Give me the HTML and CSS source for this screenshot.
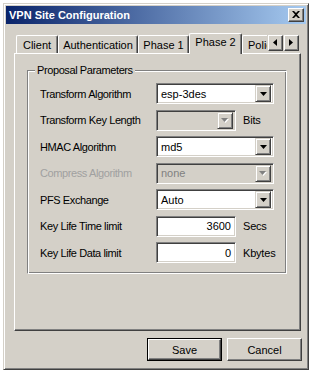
FILE: index.html
```html
<!DOCTYPE html>
<html>
<head>
<meta charset="utf-8">
<title>VPN Site Configuration</title>
<link rel="stylesheet" href="styles.css">
</head>
<body>
<div class="window">
  <div class="titlebar">
    <span class="title">VPN Site Configuration</span>
    <span class="close"><svg width="8" height="7" viewBox="0 0 8 7"><path d="M0 0h2l2 2 2-2h2L5 3.5 8 7H6L4 5 2 7H0l3-3.5z" fill="#000"/></svg></span>
  </div>
  <div class="content">
    <div class="tabstrip">
      <div class="tabrow">
        <div class="tab w-client">Client</div>
        <div class="tab w-auth">Authentication</div>
        <div class="tab w-p1">Phase 1</div>
        <div class="tab sel w-p2">Phase 2</div>
        <div class="tab w-pol">Policy</div>
      </div>
      <div class="spin">
        <span class="sbtn"><svg width="4" height="7" viewBox="0 0 4 7"><path d="M4 0v7L0 3.5z" fill="#000"/></svg></span>
        <span class="sbtn"><svg width="4" height="7" viewBox="0 0 4 7"><path d="M0 0v7l4-3.5z" fill="#000"/></svg></span>
      </div>
    </div>
    <div class="panel">
      <fieldset class="group">
        <legend>Proposal Parameters</legend>
        <div class="rows">
          <div class="row">
            <span class="lbl">Transform Algorithm</span>
            <span class="field combo wide"><span class="val">esp-3des</span><span class="drop"><svg width="7" height="4" viewBox="0 0 7 4"><path d="M0 0h7L3.5 4z" fill="#000"/></svg></span></span>
          </div>
          <div class="row">
            <span class="lbl">Transform Key Length</span>
            <span class="field combo short dis"><span class="val"></span><span class="drop"><svg width="8" height="5" viewBox="0 0 8 5"><path d="M1 1h7L4.5 5z" fill="#fff"/><path d="M0 0h7L3.5 4z" fill="#808080"/></svg></span></span>
            <span class="unit">Bits</span>
          </div>
          <div class="row">
            <span class="lbl">HMAC Algorithm</span>
            <span class="field combo wide"><span class="val">md5</span><span class="drop"><svg width="7" height="4" viewBox="0 0 7 4"><path d="M0 0h7L3.5 4z" fill="#000"/></svg></span></span>
          </div>
          <div class="row">
            <span class="lbl dimmed">Compress Algorithm</span>
            <span class="field combo wide dis"><span class="val">none</span><span class="drop"><svg width="8" height="5" viewBox="0 0 8 5"><path d="M1 1h7L4.5 5z" fill="#fff"/><path d="M0 0h7L3.5 4z" fill="#808080"/></svg></span></span>
          </div>
          <div class="row">
            <span class="lbl">PFS Exchange</span>
            <span class="field combo wide"><span class="val">Auto</span><span class="drop"><svg width="7" height="4" viewBox="0 0 7 4"><path d="M0 0h7L3.5 4z" fill="#000"/></svg></span></span>
          </div>
          <div class="row">
            <span class="lbl">Key Life Time limit</span>
            <span class="field short num"><span class="val">3600</span></span>
            <span class="unit">Secs</span>
          </div>
          <div class="row">
            <span class="lbl">Key Life Data limit</span>
            <span class="field short num"><span class="val">0</span></span>
            <span class="unit">Kbytes</span>
          </div>
        </div>
      </fieldset>
    </div>
    <div class="buttons">
      <span class="btn default"><span class="btn-in">Save</span></span>
      <span class="btn"><span class="btn-in">Cancel</span></span>
    </div>
  </div>
</div>
</body>
</html>
```

FILE: styles.css
```css
* { box-sizing: border-box; }
html, body { margin: 0; }
body {
  width: 315px;
  height: 375px;
  overflow: hidden;
  background: #ffffff;
  padding: 3px 0 0 3px;
  font: 11px "Liberation Sans", Arial, sans-serif;
  color: #000;
}
.window {
  width: 306px;
  height: 367px;
  background: #d4d0c8;
  border: 1px solid;
  border-color: #d4d0c8 #404040 #404040 #d4d0c8;
  box-shadow: inset 1px 1px #fff, inset -1px -1px #808080;
  padding: 2px;
  display: flex;
  flex-direction: column;
}
.titlebar {
  height: 18px;
  background: linear-gradient(to right, #0a246a, #a6caf0);
  display: flex;
  align-items: center;
  justify-content: space-between;
  padding: 0 2px 0 3px;
}
.title {
  color: #fff;
  font-weight: bold;
  font-size: 11px;
}
.close {
  width: 16px;
  height: 14px;
  background: #d4d0c8;
  border: 1px solid;
  border-color: #fff #404040 #404040 #fff;
  box-shadow: inset -1px -1px #808080;
  display: flex;
  align-items: center;
  justify-content: center;
  padding: 0 1px 1px 0;
}
.close svg, .drop svg, .sbtn svg { display: block; }
.content {
  flex: 1;
  display: flex;
  flex-direction: column;
  padding: 9px 0 0 8px;
}
.tabstrip {
  display: flex;
  height: 21px;
  margin-bottom: -1px;
  position: relative;
  z-index: 1;
}
.tabrow {
  width: 253px;
  overflow: hidden;
  display: flex;
  align-items: flex-end;
  padding-left: 2px;
}
.tab {
  flex: none;
  height: 18px;
  margin-bottom: 1px;
  background: #d4d0c8;
  border-top: 1px solid #fff;
  border-left: 1px solid #fff;
  border-right: 1px solid #404040;
  box-shadow: inset -1px 0 #808080;
  border-radius: 2px 2px 0 0;
  text-align: center;
  line-height: 16px;
  padding-top: 1px;
  white-space: nowrap;
}
.tab.sel {
  height: 21px;
  margin-bottom: 0;
  line-height: 16px;
  padding-top: 0;
  padding-bottom: 4px;
}
.w-client { width: 42px; }
.w-auth { width: 80px; }
.w-p1 { width: 51px; }
.w-p2 { width: 53px; }
.w-pol { width: 50px; text-align: left; padding-left: 5px; }
.spin {
  display: flex;
  gap: 1px;
  margin: 2px 0 0 1px;
  align-self: flex-start;
}
.sbtn {
  width: 15px;
  height: 16px;
  background: #d4d0c8;
  border: 1px solid;
  border-color: #fff #404040 #404040 #fff;
  box-shadow: inset -1px -1px #808080;
  display: flex;
  align-items: center;
  justify-content: center;
  padding: 0 1px 1px 0;
}
.panel {
  width: 287px;
  height: 278px;
  border: 1px solid;
  border-color: #fff #404040 #404040 #fff;
  box-shadow: inset -1px -1px #808080;
  padding: 10px 13px 0 12px;
}
.group {
  margin: 0;
  width: 260px;
  min-width: 0;
  border: 1px solid;
  border-color: #808080 #fff #fff #808080;
  box-shadow: inset 1px 1px #fff, inset -1px -1px #808080;
  padding: 6px 12px 10px 12px;
}
.group legend {
  padding: 0 2px;
  margin-left: -5px;
  background: #d4d0c8;
  line-height: 13px;
  letter-spacing: -0.4px;
}
.rows {
  display: flex;
  flex-direction: column;
  gap: 5.5px;
}
.row {
  display: flex;
  align-items: center;
  height: 21px;
}
.lbl { width: 116px; flex: none; letter-spacing: -0.4px; white-space: nowrap; }
.dimmed { color: #a0a0a0; }
.unit { padding-left: 7px; letter-spacing: -0.2px; white-space: nowrap; }
.field {
  flex: none;
  height: 21px;
  background: #fff;
  border: 1px solid;
  border-color: #808080 #fff #fff #808080;
  box-shadow: inset 1px 1px #404040, inset -1px -1px #d4d0c8;
  display: flex;
  align-items: center;
  padding: 2px;
}
.field.dis { background: #d4d0c8; color: #808080; }
.wide { width: 118px; }
.short { width: 80px; }
.val { flex: 1; padding-left: 2px; white-space: nowrap; }
.num .val { text-align: right; padding-right: 2px; }
.drop {
  width: 16px;
  height: 17px;
  background: #d4d0c8;
  border: 1px solid;
  border-color: #d4d0c8 #404040 #404040 #d4d0c8;
  box-shadow: inset 1px 1px #fff, inset -1px -1px #808080;
  display: flex;
  align-items: center;
  justify-content: center;
}
.buttons {
  display: flex;
  justify-content: flex-end;
  gap: 5px;
  margin-top: 7px;
  padding-right: 4px;
}
.btn {
  width: 75px;
  height: 23px;
  display: flex;
  border: 1px solid;
  border-color: #fff #404040 #404040 #fff;
  box-shadow: inset -1px -1px #808080;
}
.btn.default {
  border: 1px solid #000;
  box-shadow: none;
}
.btn-in {
  flex: 1;
  display: flex;
  align-items: center;
  justify-content: center;
}
.btn.default .btn-in {
  border: 1px solid;
  border-color: #fff #404040 #404040 #fff;
  box-shadow: inset -1px -1px #808080;
}
```
